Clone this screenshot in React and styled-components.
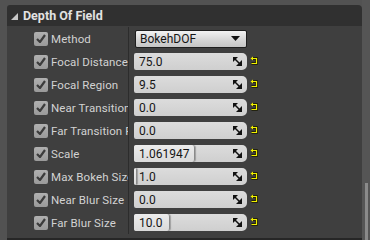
import React from "react";
import styled, { createGlobalStyle } from "styled-components";

const Global = createGlobalStyle`
  html, body { margin: 0; padding: 0; background: #525252; }
  body { font-family: Roboto, "Noto Sans", sans-serif; }
`;

const Page = styled.div`
  width: 370px;
  height: 240px;
  overflow: hidden;
  display: flex;
  background: #525252;
  padding: 5px 0 0 7px;
  box-sizing: border-box;
`;

const Panel = styled.div`
  width: 355px;
  display: flex;
  flex-direction: column;
`;

const Header = styled.div`
  height: 21px;
  flex: none;
  background: #303030;
  border-radius: 3px 4px 0 0;
  display: flex;
  align-items: center;
  gap: 5px;
  padding-left: 3px;
  color: #e2e2e2;
  font-weight: bold;
  font-size: 12.5px;
`;

const Body = styled.div`
  background: #3f3f3f;
  padding-top: 1px;
  flex: 1;
  border-bottom: 2px solid #262626;
`;

const Row = styled.div`
  height: 23px;
  display: flex;
  align-items: center;
`;

const NameCell = styled.div`
  width: 122px;
  height: 100%;
  padding-left: 27px;
  display: flex;
  align-items: center;
  gap: 3px;
  box-sizing: border-box;
  border-right: 1px solid #2c2c2c;
  overflow: hidden;
`;

const Check = styled.div`
  width: 14px;
  height: 14px;
  flex: none;
  border-radius: 2px;
  background: linear-gradient(#b0b0b0, #9a9a9a);
  display: flex;
  align-items: center;
  justify-content: center;
`;

const Label = styled.span`
  flex: 1;
  min-width: 0;
  overflow: hidden;
  color: #d2d2d2;
  font-size: 11.5px;
  letter-spacing: 0.1px;
  white-space: nowrap;
`;

const ValueCell = styled.div`
  height: 100%;
  padding-left: 5px;
  display: flex;
  align-items: center;
  gap: 3px;
`;

const Input = styled.div`
  position: relative;
  width: 113px;
  height: 17px;
  box-sizing: border-box;
  border-radius: 2px 5px 5px 2px;
  background: linear-gradient(#dcdcdc, #cfcfcf);
  display: flex;
  align-items: center;
  justify-content: space-between;
  padding: 0 5px 0 5px;
  color: #151515;
  font-size: 12px;
  overflow: hidden;
`;

const Fill = styled.div`
  position: absolute;
  left: 0;
  top: 0;
  bottom: 0;
  background: linear-gradient(#ececec, #dadada);
  border-right: 1px solid #8a8a8a;
  border-radius: 2px 3px 3px 2px;
  box-shadow: 1px 0 1px rgba(0,0,0,0.25);
`;

const InputText = styled.span`
  position: relative;
`;

const Spin = styled.svg`
  position: relative;
  flex: none;
`;

const Dropdown = styled.div`
  width: 112px;
  height: 18px;
  margin-left: 1px;
  box-sizing: border-box;
  border: 1px solid #1e1e1e;
  border-radius: 2px;
  background: linear-gradient(#f2f2f2, #d4d4d4 60%, #c4c4c4);
  display: flex;
  align-items: center;
  justify-content: space-between;
  padding: 0 6px 0 4px;
  color: #151515;
  font-size: 12px;
`;

const Reset = styled.svg`
  flex: none;
  margin-top: -3px;
`;

const ScrollTrack = styled.div`
  width: 8px;
  margin-top: -5px;
  display: flex;
  flex-direction: column;
  padding-left: 3px;
  box-sizing: border-box;
  background: #555;
`;

const ScrollThumb = styled.div`
  margin-top: 183px;
  width: 3px;
  flex: 1;
  background: #8a8a8a;
`;

const rows = [
  { name: "Method", type: "dropdown", value: "BokehDOF" },
  { name: "Focal Distance", value: "75.0" },
  { name: "Focal Region", value: "9.5" },
  { name: "Near Transition Region", value: "0.0" },
  { name: "Far Transition Region", value: "0.0" },
  { name: "Scale", value: "1.061947", fill: 60 },
  { name: "Max Bokeh Size", value: "1.0", fill: 2 },
  { name: "Near Blur Size", value: "0.0" },
  { name: "Far Blur Size", value: "10.0", fill: 35 },
];

const CheckMark = () => (
  <svg width="10" height="9" viewBox="0 0 10 9">
    <path d="M1 5 L4 8 L9 1" fill="none" stroke="#3c3c3c" strokeWidth="2.2" />
  </svg>
);

const SpinIcon = () => (
  <Spin width="9" height="9" viewBox="0 0 9 9">
    <polygon points="0,0 5,0 0,5" fill="#111" />
    <polygon points="9,3 9,9 3,9" fill="#111" />
    <line x1="1" y1="1" x2="8" y2="8" stroke="#111" strokeWidth="1.5" />
  </Spin>
);

const ResetIcon = () => (
  <Reset width="8" height="9" viewBox="0 0 8 9">
    <path d="M1.5 2.5 H6.5 V7.5 H1.5" fill="none" stroke="#1a1a00" strokeWidth="2.6" />
    <path d="M1.5 2.5 H6.5 V7.5 H1.5" fill="none" stroke="#f0f000" strokeWidth="1.2" />
    <path d="M0.5 2.5 L3 0.5 V4.5 Z" fill="#f0f000" />
  </Reset>
);

export default function App() {
  return (
    <>
      <Global />
      <Page>
        <Panel>
          <Header>
            <svg width="8" height="8" viewBox="0 0 8 8">
              <polygon points="8,1 8,8 1,8" fill="#c8c8c8" />
            </svg>
            Depth Of Field
          </Header>
          <Body>
            {rows.map((r) => (
              <Row key={r.name}>
                <NameCell>
                  <Check>
                    <CheckMark />
                  </Check>
                  <Label>{r.name}</Label>
                </NameCell>
                <ValueCell>
                  {r.type === "dropdown" ? (
                    <Dropdown>
                      <span>{r.value}</span>
                      <svg width="9" height="5" viewBox="0 0 9 5">
                        <polygon points="0,0 9,0 4.5,5" fill="#111" />
                      </svg>
                    </Dropdown>
                  ) : (
                    <>
                      <Input>
                        {r.fill ? <Fill style={{ width: r.fill }} /> : null}
                        <InputText>{r.value}</InputText>
                        <SpinIcon />
                      </Input>
                      <ResetIcon />
                    </>
                  )}
                </ValueCell>
              </Row>
            ))}
          </Body>
        </Panel>
        <ScrollTrack>
          <ScrollThumb />
        </ScrollTrack>
      </Page>
    </>
  );
}
